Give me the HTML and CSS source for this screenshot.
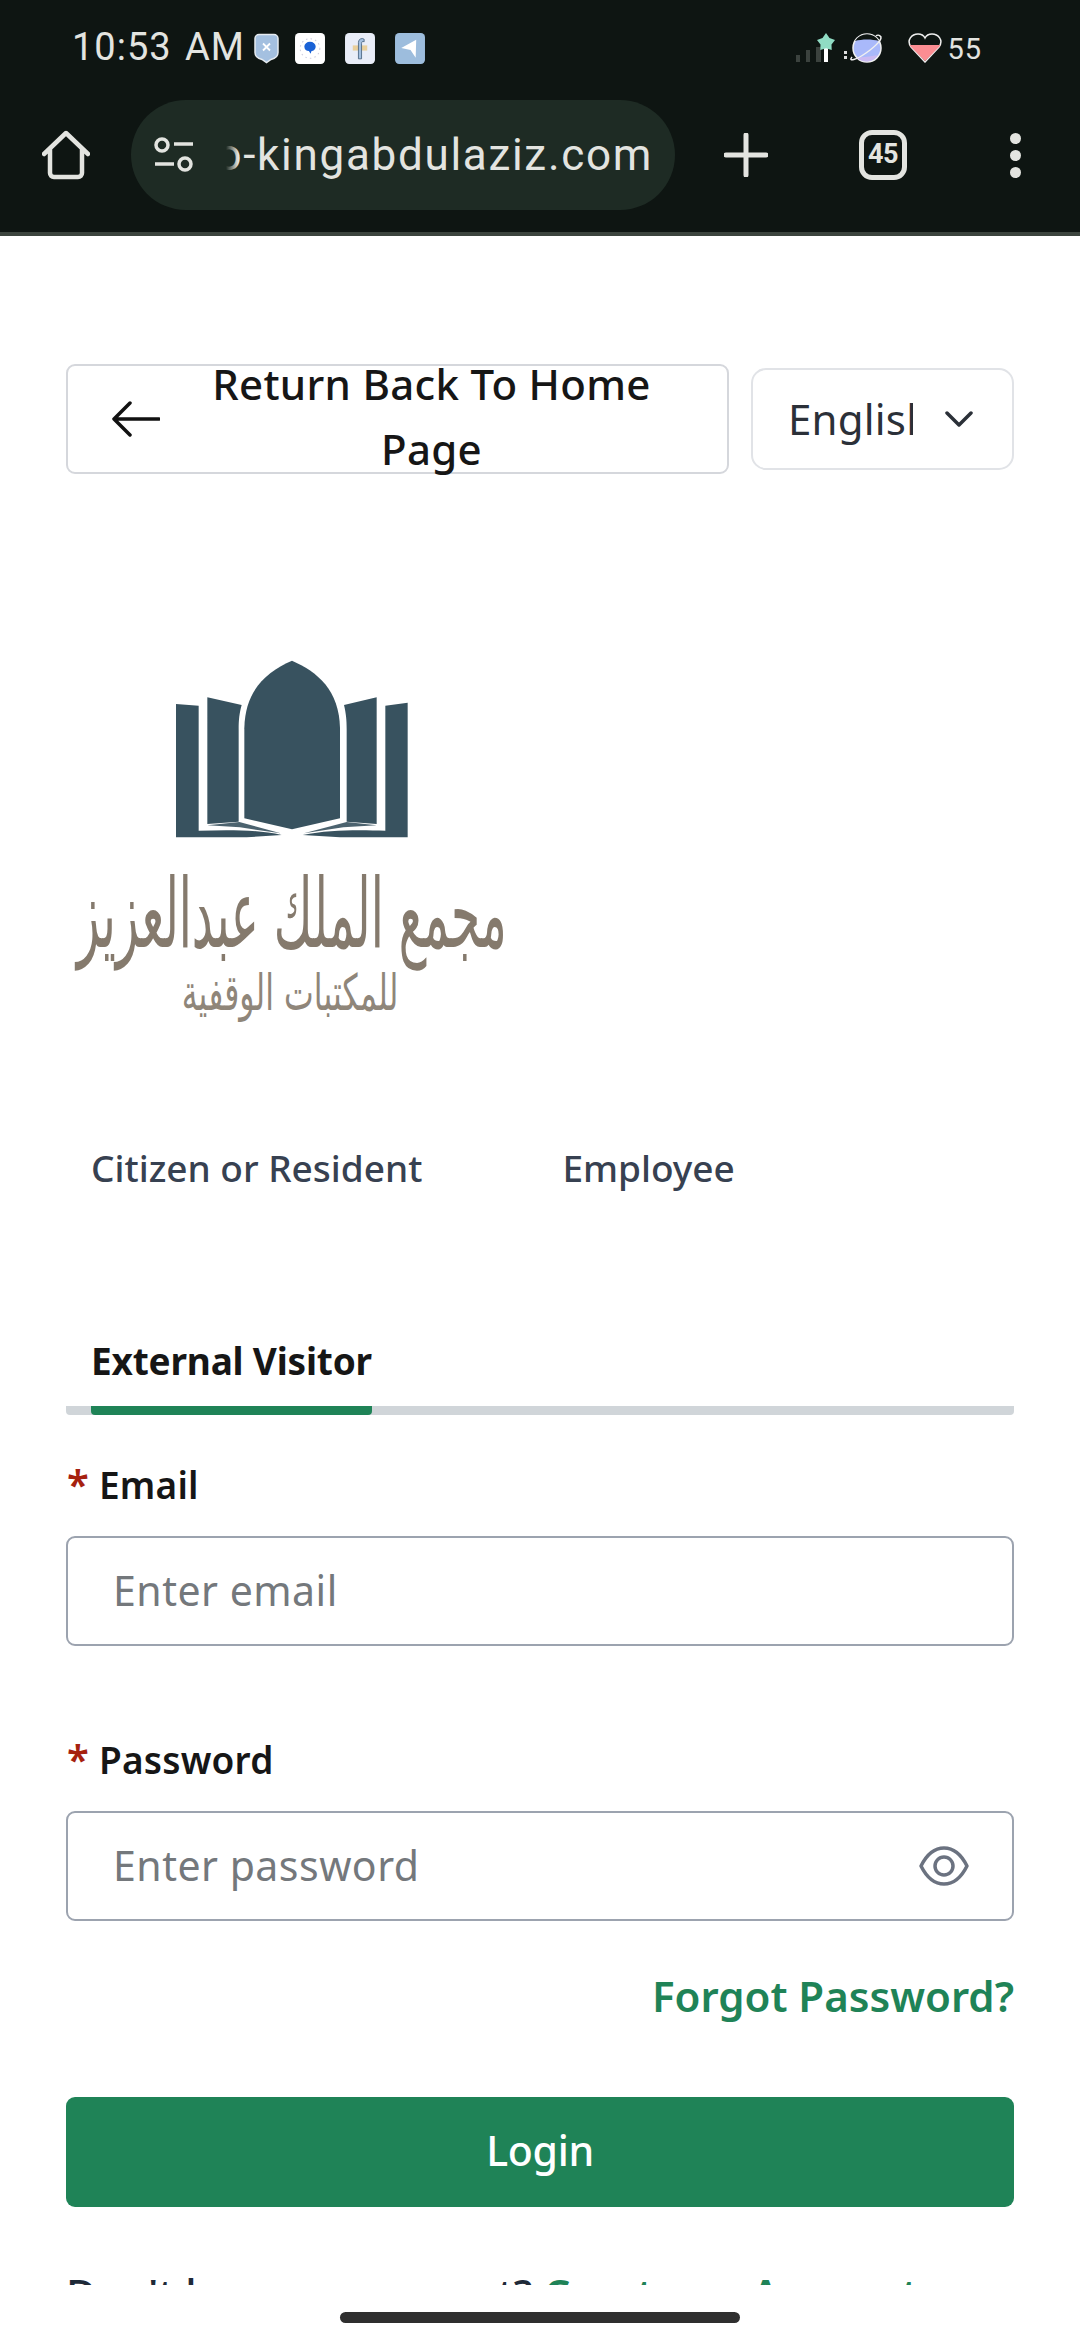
FILE: index.html
```html
<!DOCTYPE html>
<html lang="en">
<head>
<meta charset="utf-8">
<title>Login</title>
<link rel="stylesheet" href="styles.css">
</head>
<body>
<div class="phone">
  <header class="chrome">
    <div class="status">
      <span class="time">10:53 AM</span>
      <div class="notifs">
        <svg class="n-shield" viewBox="0 0 25 30"><path d="M5 1h15a4 4 0 0 1 4 4v14c0 4-3 6-7 7l-4.500 3-4.500-3c-4-1-7-3-7-7V5a4 4 0 0 1 4-4z" fill="#a4c0e0" stroke="#e6ebf0" stroke-width="1.500"/><path d="M9 10l7 7M16 10l-7 7" stroke="#fff" stroke-width="1.800"/></svg>
        <svg class="n-app" viewBox="0 0 29 30"><rect width="29" height="30" rx="4" fill="#fff"/><circle cx="14.500" cy="15" r="9.500" fill="none" stroke="#ccd" stroke-dasharray="1.500 3"/><path d="M9 13a5.500 4.500 0 0 1 11 0c0 3-2.500 4.500-4 4.500l-1 2.500-1.500-2.500C11 17.500 9 16 9 13z" fill="#1a62d6"/></svg>
        <svg class="n-app" viewBox="0 0 29 30"><rect width="29" height="30" rx="4" fill="#e9edf8"/><rect x="7.500" y="12" width="14" height="5" fill="#e9cf9c"/><path d="M13 25V9a3.500 3.500 0 0 1 5.500-3v2.500c-1.500-.8-2.500 0-2.500 1.500v15z" fill="#a4c0e0" stroke="#45607c" stroke-width=".8"/></svg>
        <svg class="n-app" viewBox="0 0 29 30"><rect width="29" height="30" rx="4" fill="#9dbddd"/><path d="M6 14.500L20.500 6.500 20 24l-5-7.500z" fill="#fff"/></svg>
      </div>
      <div class="sys">
        <svg class="s-signal" viewBox="0 0 40 30"><rect x="1" y="22" width="4" height="7" fill="#3b423e"/><rect x="11" y="17" width="4" height="12" fill="#3b423e"/><rect x="21" y="14" width="5" height="15" fill="#3b423e"/><rect x="29" y="12" width="4" height="17" fill="#fff"/><path d="M31 0l3.500 5 5.500 2-3.500 4.500.2 5.500-5.700-1.800-5.700 1.800.2-5.500L22 7l5.500-2z" fill="#90dcc4"/></svg>
        <svg class="s-planet" viewBox="0 0 40 30"><rect x="0" y="18" width="3" height="3" fill="#ddd"/><rect x="0" y="23" width="3" height="3" fill="#ddd"/><circle cx="23" cy="15" r="14" fill="#a9b9fa" stroke="#f0f0f0" stroke-width="1.500"/><path d="M11 8a14 14 0 0 1 24 0c-7-2-17-2-24 0z" fill="#0e1512"/><path d="M12 24a14 14 0 0 0 22-2c-7 1-15 3-22 2z" fill="#cbbaf2"/><path d="M8 24C4 29 12 27 22 20S40 5 36 3c-1-1-3-1-4 0" fill="none" stroke="#f0f0f0" stroke-width="1.500"/></svg>
        <svg class="s-heart" viewBox="0 0 34 30"><path d="M17 29L3 14C-2 7 4 1 10 1c3 0 6 2 7 4 1-2 4-4 7-4 6 0 12 6 7 13z" fill="#0e1512" stroke="#eee" stroke-width="1.500"/><path d="M1.500 12h31L31 14 17 28 3 14z" fill="#fb8d92"/></svg>
        <span class="batt">55</span>
      </div>
    </div>
    <div class="toolbar">
      <svg class="ic-home" viewBox="0 0 48 50"><path d="M2 24L24 3l22 21M8 19v24a4 4 0 0 0 4 4h24a4 4 0 0 0 4-4V19" fill="none" stroke="#e3e4e0" stroke-width="4.500" stroke-linecap="round" stroke-linejoin="round"/></svg>
      <div class="pill">
        <svg class="ic-tune" viewBox="0 0 40 36"><circle cx="8" cy="8" r="6" fill="none" stroke="#e3e4e0" stroke-width="3.500"/><path d="M20 7h19M1 27h19" stroke="#e3e4e0" stroke-width="3.500"/><circle cx="31" cy="27" r="6" fill="none" stroke="#e3e4e0" stroke-width="3.500"/></svg>
        <div class="url"><span>o-kingabdulaziz.com</span></div>
      </div>
      <svg class="ic-plus" viewBox="0 0 44 44"><path d="M22 2v40M2 22h40" stroke="#e3e4e0" stroke-width="5" stroke-linecap="round"/></svg>
      <div class="tabcount">45</div>
      <div class="dots"><i></i><i></i><i></i></div>
    </div>
  </header>

  <main class="page">
    <div class="top-row">
      <button class="back">
        <svg class="ic-back" viewBox="0 0 48 36"><path d="M47 18H3M18 2L2 18l16 16" fill="none" stroke="#111" stroke-width="3.500" stroke-linecap="round" stroke-linejoin="round"/></svg>
        <span class="back-text">Return Back To Home Page</span>
      </button>
      <div class="lang">
        <span class="lang-text"><span>English</span></span>
        <svg class="ic-chev" viewBox="0 0 28 16"><path d="M2 2l12 12L26 2" fill="none" stroke="#2b3038" stroke-width="3.500" stroke-linecap="round" stroke-linejoin="round"/></svg>
      </div>
    </div>

    <svg class="logo" viewBox="0 0 1410 1200" aria-label="logo">
      <g fill="#38525f">
        <path d="M696 62C620 95 555 150 553 265V535L696 568 840 535V265C838 150 772 95 696 62Z"/>
        <path d="M442 172L545 195C538 220 536 240 536 268V545L442 552Z"/>
        <path d="M950 172L852 195C858 220 860 240 860 268V545L950 552Z"/>
        <path d="M348 192L416 197V572C500 570 590 568 665 585L560 592H348Z"/>
        <path d="M1043 188L976 197V572C900 570 810 568 728 585L840 592H1043Z"/>
        <path d="M442 556L538 546 662 580 540 562Z" opacity=".9"/>
        <path d="M950 556L860 546 732 580 850 562Z" opacity=".9"/>
      </g>
      <text class="ar ar-big" x="695" y="920" text-anchor="middle" textLength="1290" lengthAdjust="spacingAndGlyphs">مجمع الملك عبدالعزيز</text>
      <text class="ar ar-small" x="690" y="1110" text-anchor="middle" textLength="650" lengthAdjust="spacingAndGlyphs">للمكتبات الوقفية</text>
    </svg>

    <nav class="tabs-a">
      <span class="tab-a">Citizen or Resident</span>
      <span class="tab-a">Employee</span>
    </nav>

    <div class="tabs-b">
      <span class="tab-b">External Visitor</span>
    </div>

    <form class="form">
      <label class="label"><span class="req">*</span>Email</label>
      <div class="field"><span class="ph">Enter email</span></div>
      <label class="label label-pw"><span class="req">*</span>Password</label>
      <div class="field">
        <span class="ph">Enter password</span>
        <svg class="ic-eye" viewBox="0 0 50 40"><path d="M2 20C8 8 16 2 25 2s17 6 23 18c-6 12-14 18-23 18S8 32 2 20z" fill="none" stroke="#6b7280" stroke-width="3.500" stroke-linejoin="round"/><circle cx="25" cy="20" r="9" fill="none" stroke="#6b7280" stroke-width="3.500"/></svg>
      </div>
      <a class="forgot">Forgot Password?</a>
      <button class="login" type="button">Login</button>
      <p class="signup">Don't have an account? <a>Create an Account</a></p>
    </form>
  </main>

  <footer class="navbar"><div class="handle"></div></footer>
</div>
</body>
</html>
```

FILE: styles.css
```css
* { box-sizing: border-box; }
html, body { margin: 0; padding: 0; background: #fff; }
body { font-family: "Noto Sans", "Liberation Sans", sans-serif; }
.phone { width: 1080px; height: 2340px; display: flex; flex-direction: column; overflow: hidden; }

.chrome { height: 236px; background: #0e1512; border-bottom: 4px solid #3c443e; color: #e3e4e0; font-family: Roboto, sans-serif; flex: none; }
.status { height: 100px; display: flex; align-items: flex-start; padding: 29px 0 0 72px; }
.time { font-size: 38px; line-height: 36px; letter-spacing: 1px; word-spacing: 3px; width: 182px; white-space: nowrap; }
.notifs { display: flex; gap: 20px; align-items: flex-start; padding-top: 4px; }
.notifs svg { display: block; height: 31px; }
.n-shield { width: 25px; margin-right: -4px; }
.n-app { width: 30px; }
.sys { margin-left: auto; display: flex; align-items: flex-start; padding: 4px 98px 0 0; }
.sys svg { display: block; height: 30px; }
.s-signal { width: 40px; }
.s-planet { width: 40px; margin-left: 9px; }
.s-heart { width: 34px; margin-left: 24px; }
.batt { font-size: 29px; line-height: 32px; margin-left: 5px; letter-spacing: 1px; }

.toolbar { height: 132px; display: flex; align-items: flex-start; position: relative; }
.ic-home { width: 48px; height: 50px; margin: 30px 0 0 42px; flex: none; }
.pill { width: 544px; height: 110px; margin-left: 41px; background: #1e2b24; border-radius: 55px; display: flex; align-items: center; padding: 0 22px 0 23px; flex: none; }
.ic-tune { width: 40px; height: 36px; flex: none; }
.url { position: relative; flex: 1; margin-left: 14px; overflow: hidden; white-space: nowrap; font-size: 44px; line-height: 56px; letter-spacing: 1.7px; display: flex; justify-content: flex-end; }
.url span { flex: none; }
.url::before { content: ""; position: absolute; left: 0; top: 0; bottom: 0; width: 30px; background: linear-gradient(90deg, #1e2b24 60%, rgba(30,43,36,0)); }
.ic-plus { width: 44px; height: 44px; margin: 33px 0 0 49px; flex: none; }
.tabcount { width: 48px; height: 50px; margin: 30px 0 0 91px; flex: none; border: 5px solid #e3e4e0; border-radius: 13px; font-size: 27px; font-weight: 700; line-height: 38px; text-align: center; letter-spacing: -.5px; }
.dots { margin: 33px 0 0 103px; display: flex; flex-direction: column; gap: 6px; flex: none; }
.dots i { display: block; width: 11px; height: 11px; border-radius: 50%; background: #e3e4e0; }

.page { height: 2049px; overflow: hidden; flex: none; padding: 128px 66px 0; color: #161616; }
.top-row { display: flex; align-items: center; justify-content: space-between; height: 110px; }
.back { width: 663px; height: 110px; border: 2px solid #d5d7dc; border-radius: 9px; background: #fff; display: flex; align-items: center; padding: 0 36px 0 44px; font: inherit; color: #161616; flex: none; }
.ic-back { width: 48px; height: 36px; flex: none; }
.back-text { flex: 1; font-size: 42px; line-height: 65px; font-weight: 500; text-align: center; letter-spacing: .3px; padding: 0 0 6px 12px; }
.lang { width: 263px; height: 102px; border: 2px solid #e1e3e7; border-radius: 15px; display: flex; align-items: center; padding-left: 35px; flex: none; color: #2b3038; }
.lang-text { display: block; width: 125px; overflow: hidden; font-size: 42px; line-height: 56px; white-space: nowrap; letter-spacing: .2px; }
.ic-chev { width: 28px; height: 16px; margin-left: 32px; flex: none; }

.logo { display: block; width: 470px; height: 400px; margin: 166px 0 0 -6px; }
.ar { font-family: "DejaVu Sans", sans-serif; fill: #857a6d; }
.ar-big { font-size: 290px; }
.ar-small { font-size: 150px; fill: #8f867a; }

.tabs-a { display: flex; gap: 140px; margin-top: 99px; padding-left: 25px; height: 60px; align-items: center; }
.tab-a { font-size: 37px; line-height: 56px; padding-bottom: 2px; font-weight: 500; color: #374151; letter-spacing: 0; white-space: nowrap; }

.tabs-b { margin-top: 132px; height: 84px; border-bottom: 9px solid #d0d5d9; border-radius: 0 0 4px 4px; padding-left: 25px; display: flex; }
.tab-b { height: 84px; margin-bottom: -9px; border-bottom: 9px solid #1f8357; border-radius: 4px; font-size: 37px; line-height: 60px; font-weight: 700; letter-spacing: -.2px; white-space: nowrap; color: #161616; }

.form { display: block; }
.label { display: flex; align-items: center; height: 50px; margin-top: 45px; padding-bottom: 2px; font-size: 37px; font-weight: 600; letter-spacing: .2px; }
.label-pw { margin-top: 89px; }
.req { color: #a6210f; width: 32px; margin-left: 1px; font-size: 40px; line-height: 50px; }
.field { height: 110px; margin-top: 26px; border: 2px solid #9ca3af; border-radius: 9px; display: flex; align-items: center; justify-content: space-between; padding: 0 46px 0 45px; }
.ph { font-size: 41px; color: #74787c; letter-spacing: .5px; white-space: nowrap; padding-bottom: 3px; }
.ic-eye { width: 50px; height: 40px; margin-right: -3px; }
.forgot { display: block; margin-top: 46px; height: 60px; text-align: right; color: #1f8357; font-size: 42px; line-height: 57px; font-weight: 600; }
.login { display: block; width: 100%; height: 110px; margin-top: 70px; padding: 0 0 4px; border: 0; border-radius: 9px; background: #1f8357; color: #fff; font: inherit; font-size: 41px; font-weight: 500; letter-spacing: -.3px; }
.signup { margin: 57px 0 0; font-size: 42px; line-height: 60px; color: #1e2a38; white-space: nowrap; font-weight: 500; }
.signup a { color: #1f8357; font-weight: 600; }

.navbar { flex: 1; background: #fff; display: flex; justify-content: center; }
.handle { width: 400px; height: 11px; margin-top: 27px; border-radius: 6px; background: #2f2f2f; }
```
